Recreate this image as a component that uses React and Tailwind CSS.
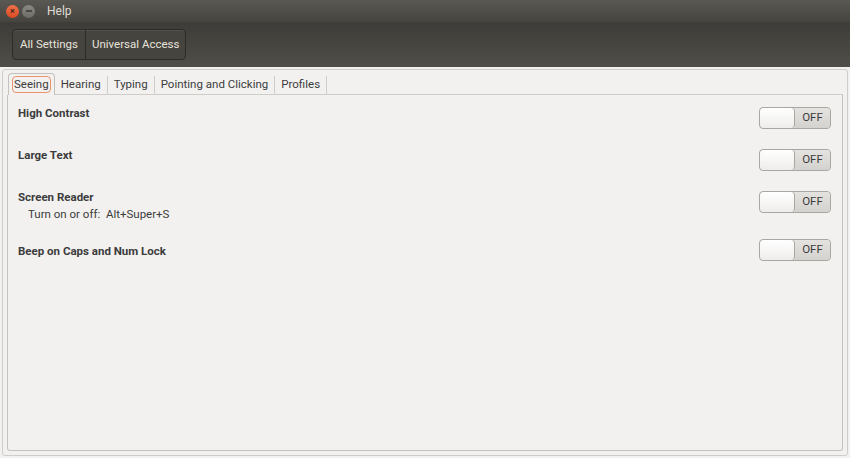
import React from 'react';

const font = { fontFamily: 'Roboto, "Open Sans", sans-serif' };

const Toggle = () => (
  <div className="flex h-[22px] w-[72px] overflow-hidden rounded-[4px] border border-[#a9a7a3] bg-[#dcdad6]">
    <div className="h-full w-[35px] rounded-[4px] border-r border-[#a9a7a3] bg-gradient-to-b from-[#ffffff] to-[#eeedeb]" />
    <div className="flex flex-1 items-center justify-center bg-gradient-to-b from-[#e4e3e0] to-[#d4d2ce] text-[11.5px] text-[#3c3c3c]">OFF</div>
  </div>
);

const settings = [
  { label: 'High Contrast', h: 'h-[42px]', t: 'mt-[1px]' },
  { label: 'Large Text', h: 'h-[42px]', t: 'mt-[1px]' },
  { label: 'Screen Reader', sub: 'Turn on or off:  Alt+Super+S', h: 'h-[54px]', t: 'mt-[1px]' },
  { label: 'Beep on Caps and Num Lock', h: 'h-[42px]', t: '-mt-[5px]' },
];

const tabs = ['Seeing', 'Hearing', 'Typing', 'Pointing and Clicking', 'Profiles'];

export default function App() {
  return (
    <div className="flex h-[458px] w-[850px] flex-col overflow-hidden bg-[#f2f1f0]" style={font}>
      {/* Title bar */}
      <div className="flex h-[22px] items-center bg-gradient-to-b from-[#5a5852] to-[#46443f] pl-[6px]">
        <div className="flex h-[13px] w-[13px] items-center justify-center rounded-full bg-gradient-to-b from-[#f0734a] to-[#d9481e] text-[9px] font-bold leading-none text-[#4a2a1e]">×</div>
        <div className="ml-[3px] flex h-[13px] w-[13px] items-center justify-center rounded-full bg-gradient-to-b from-[#8a8882] to-[#6e6c66]">
          <div className="h-[2px] w-[6px] bg-[#4a4843]" />
        </div>
        <span className="ml-[12px] text-[12px] text-[#dfdbd2]">Help</span>
      </div>

      {/* Toolbar */}
      <div className="flex h-[45px] items-center bg-gradient-to-b from-[#3d3c38] to-[#504e48] pl-[12px]">
        <div className="flex h-[31px] overflow-hidden rounded-[4px] border border-[#2c2b28] bg-[#46443f] text-[11.5px] text-[#e6e3dc] shadow-[inset_0_1px_0_rgba(255,255,255,0.08)]">
          <div className="flex items-center px-[7px]">All Settings</div>
          <div className="w-px bg-[#2c2b28]" />
          <div className="flex items-center px-[6px]">Universal Access</div>
        </div>
      </div>

      {/* Content frame */}
      <div className="mx-[2px] mb-[2px] mt-[2px] flex flex-1 flex-col rounded-[3px] border border-[#cfcdc9] px-[4px] pb-[4px] pt-[4px]">
        <div className="flex h-[21px] items-end pl-[1px] text-[11.5px] text-[#3c3c3c]">
          <div className="flex h-[22px] items-center rounded-t-[4px] border border-b-0 border-[#c4c2bd] bg-[#f2f1f0] px-[3px]">
            <span className="rounded-[4px] border border-[#e9946f] px-[1px] leading-[15px]">Seeing</span>
          </div>
          {tabs.slice(1).map((t) => (
            <div key={t} className="flex h-[19px] items-center border-b border-r border-[#cfcdc9] px-[6px]">{t}</div>
          ))}
          <div className="flex-1 border-b border-[#cfcdc9]" />
        </div>
        <div className="flex flex-1 flex-col rounded-b-[3px] border border-t-0 border-[#c4c2bd] pl-[10px] pr-[11px] pt-[11px]">
          {settings.map((s) => (
            <div key={s.label} className={`flex ${s.h} items-start justify-between`}>
              <div>
                <div className="text-[11.5px] font-bold leading-[14px] text-[#3c3c3c]">{s.label}</div>
                {s.sub && <div className="mt-[3px] whitespace-pre pl-[10px] text-[11.5px] leading-[14px] text-[#3c3c3c]">{s.sub}</div>}
              </div>
              <div className={s.t}><Toggle /></div>
            </div>
          ))}
        </div>
      </div>
    </div>
  );
}
